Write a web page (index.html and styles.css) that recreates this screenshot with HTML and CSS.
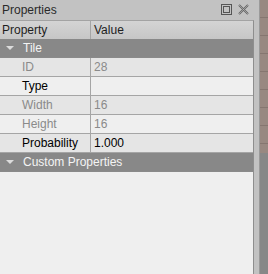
FILE: index.html
```html
<!DOCTYPE html>
<html lang="en">
<head>
    <meta charset="UTF-8">
    <title>Properties</title>
    <link rel="stylesheet" href="styles.css">
</head>
<body>
    <div class="screen">
        <div class="dock">
            <div class="titlebar">
                <span class="title">Properties</span>
                <span class="btns">
                    <svg width="11" height="11" viewBox="0 0 11 11">
                        <rect x="0.5" y="0.5" width="10" height="10" fill="none" stroke="#555" />
                        <rect x="2.5" y="2.5" width="6" height="6" fill="none" stroke="#555" />
                    </svg>
                    <svg width="11" height="11" viewBox="0 0 11 11">
                        <path d="M1 1 L10 10 M10 1 L1 10" stroke="#666" stroke-width="2" fill="none" />
                        <path d="M1 1 L10 10 M10 1 L1 10" stroke="#c3c3c3" stroke-width="0.6" fill="none" />
                    </svg>
                </span>
            </div>
            <div class="panel">
                <div class="row head">
                    <div class="name">Property</div>
                    <div class="val">Value</div>
                </div>
                <div class="row group"><span class="tri"></span>Tile</div>
                <div class="row dark off">
                    <div class="name">ID</div>
                    <div class="val">28</div>
                </div>
                <div class="row light">
                    <div class="name">Type</div>
                    <div class="val"></div>
                </div>
                <div class="row dark off">
                    <div class="name">Width</div>
                    <div class="val">16</div>
                </div>
                <div class="row light off">
                    <div class="name">Height</div>
                    <div class="val">16</div>
                </div>
                <div class="row dark">
                    <div class="name">Probability</div>
                    <div class="val">1.000</div>
                </div>
                <div class="row group"><span class="tri"></span>Custom Properties</div>
            </div>
        </div>
        <div class="side"></div>
    </div>
</body>
</html>
```

FILE: styles.css
```css
body{
    margin: 0;
    background: #c2c2c2;
    font-family: "Liberation Sans", Arial, sans-serif;
    font-size: 12px;
}
.screen{
    display: flex;
    width: 268px;
    height: 274px;
    overflow: hidden;
}
.dock{
    width: 260px;
    display: flex;
    flex-direction: column;
    background: #c2c2c2;
}
.titlebar{
    height: 20px;
    display: flex;
    align-items: center;
    justify-content: space-between;
    padding: 0 10px 0 2px;
    color: #2a2a2a;
}
.btns{
    display: flex;
    gap: 6px;
    margin-top: -2px;
}
.btns svg{
    display: block;
}
.panel{
    flex: 1;
    width: 253px;
    background: #efefef;
    border-top: 1px solid #a3a3a3;
    border-right: 1px solid #8e8e8e;
}
.row{
    display: flex;
    height: 19px;
    box-sizing: border-box;
    border-bottom: 1px solid #a5a5a5;
    line-height: 18px;
}
.name{
    width: 91px;
    box-sizing: border-box;
    padding-left: 22px;
    border-right: 1px solid #a5a5a5;
}
.val{
    padding-left: 3px;
}
.head{
    height: 18px;
    border-bottom: none;
    background: linear-gradient(#d4d4d4, #c6c6c6);
    color: #1e1e1e;
}
.head .name{
    padding-left: 2px;
}
.group{
    background: #888888;
    color: #f4f4f4;
    align-items: center;
    padding-left: 6px;
    line-height: 18px;
    border-bottom-color: #8a8a8a;
}
.tri{
    width: 0;
    height: 0;
    border-left: 4px solid transparent;
    border-right: 4px solid transparent;
    border-top: 4px solid #dcdcdc;
    margin-right: 9px;
}
.dark{
    background: #e5e5e5;
}
.light{
    background: #efefef;
}
.off{
    color: #8a8a8a;
}
.side{
    width: 8px;
    border-left: 1px solid #9a9a9a;
    background:
        repeating-linear-gradient(#988881 0, #988881 17px, #857670 17px, #857670 18px) top / 100% 153px no-repeat,
        #878787;
}
```
